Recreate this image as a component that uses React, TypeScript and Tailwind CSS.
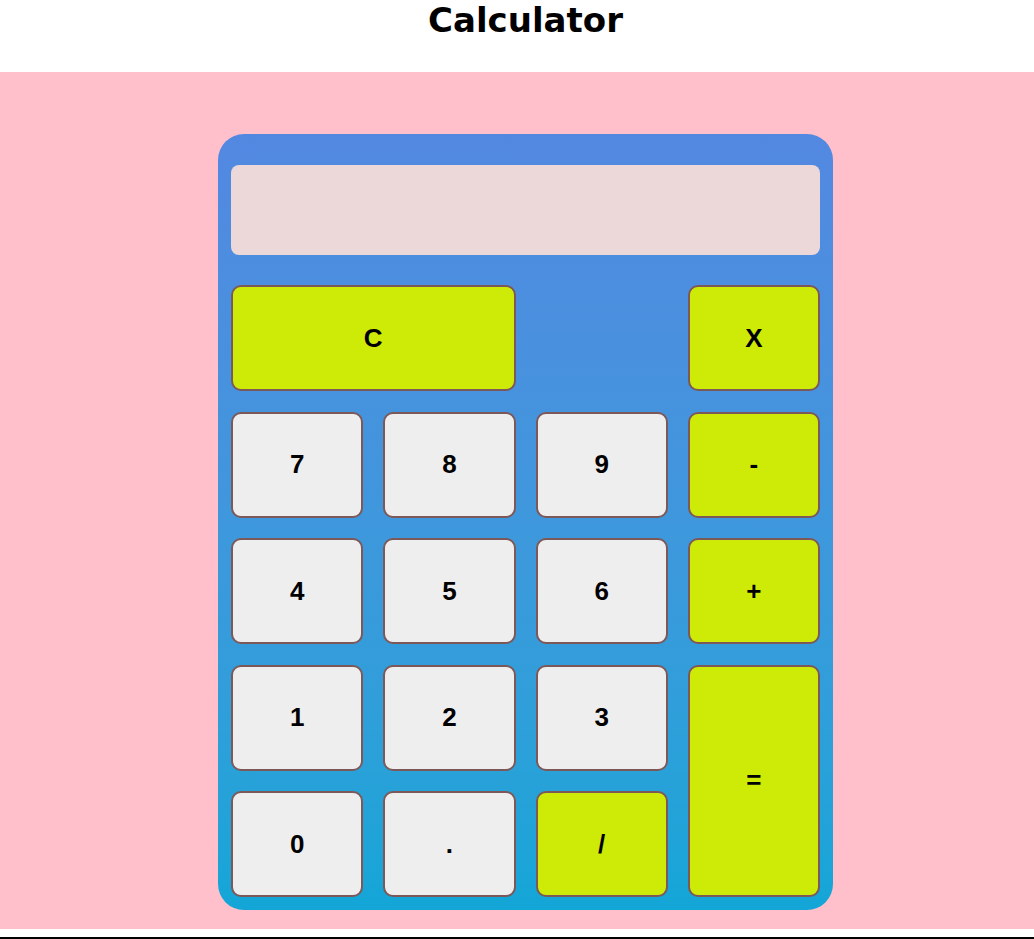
import React, { useState } from "react";

type Key = { label: string; kind: "num" | "op"; cls?: string };

const keys: Key[] = [
  { label: "C", kind: "op", cls: "col-span-2" },
  { label: "X", kind: "op", cls: "col-start-4" },
  { label: "7", kind: "num" },
  { label: "8", kind: "num" },
  { label: "9", kind: "num" },
  { label: "-", kind: "op" },
  { label: "4", kind: "num" },
  { label: "5", kind: "num" },
  { label: "6", kind: "num" },
  { label: "+", kind: "op" },
  { label: "1", kind: "num" },
  { label: "2", kind: "num" },
  { label: "3", kind: "num" },
  { label: "=", kind: "op", cls: "row-span-2" },
  { label: "0", kind: "num" },
  { label: ".", kind: "num" },
  { label: "/", kind: "op" },
];

export default function App() {
  const [display, setDisplay] = useState("");

  const press = (k: string) => {
    if (k === "C") return setDisplay("");
    if (k === "X") return setDisplay((d) => d.slice(0, -1));
    if (k === "=") {
      try {
        // eslint-disable-next-line no-new-func
        setDisplay(String(Function(`return (${display})`)()));
      } catch {
        setDisplay("Error");
      }
      return;
    }
    setDisplay((d) => d + k);
  };

  return (
    <div className="min-h-screen bg-white">
      {/* Header */}
      <div className="h-[72px] pl-[17px] flex justify-center">
        <h1
          className="text-[34px] leading-[40px] font-bold text-black"
          style={{ fontFamily: '"Comic Sans MS", "DejaVu Sans", sans-serif' }}
        >
          Calculator
        </h1>
      </div>

      {/* Pink section */}
      <div className="bg-[#ffc0cb] pt-[62px] pb-[19px] pl-[17px] flex justify-center">
        <div className="w-[615px] rounded-[26px] bg-gradient-to-b from-[#5388e1] to-[#12a6d7] pt-[31px] px-[13px] pb-[13px]">
          <div className="h-[90px] rounded-lg bg-[#ecd8d8] flex items-center justify-end px-4 text-4xl font-['Liberation_Sans',sans-serif] text-black">
            {display}
          </div>

          <div className="mt-[30px] grid grid-cols-4 auto-rows-[106px] gap-x-[20px] gap-y-[20.5px]">
            {keys.map((k) => (
              <button
                key={k.label}
                onClick={() => press(k.label)}
                className={`rounded-[10px] border-2 border-[#7d5858] text-[26px] font-bold text-black font-['Liberation_Sans',Arial,sans-serif] ${
                  k.kind === "op" ? "bg-[#ceeb07]" : "bg-[#efeeef]"
                } ${k.cls ?? ""}`}
              >
                {k.label}
              </button>
            ))}
          </div>
        </div>
      </div>

      {/* Footer rule */}
      <div className="h-[8px]" />
      <div className="h-[2px] bg-black" />
    </div>
  );
}
